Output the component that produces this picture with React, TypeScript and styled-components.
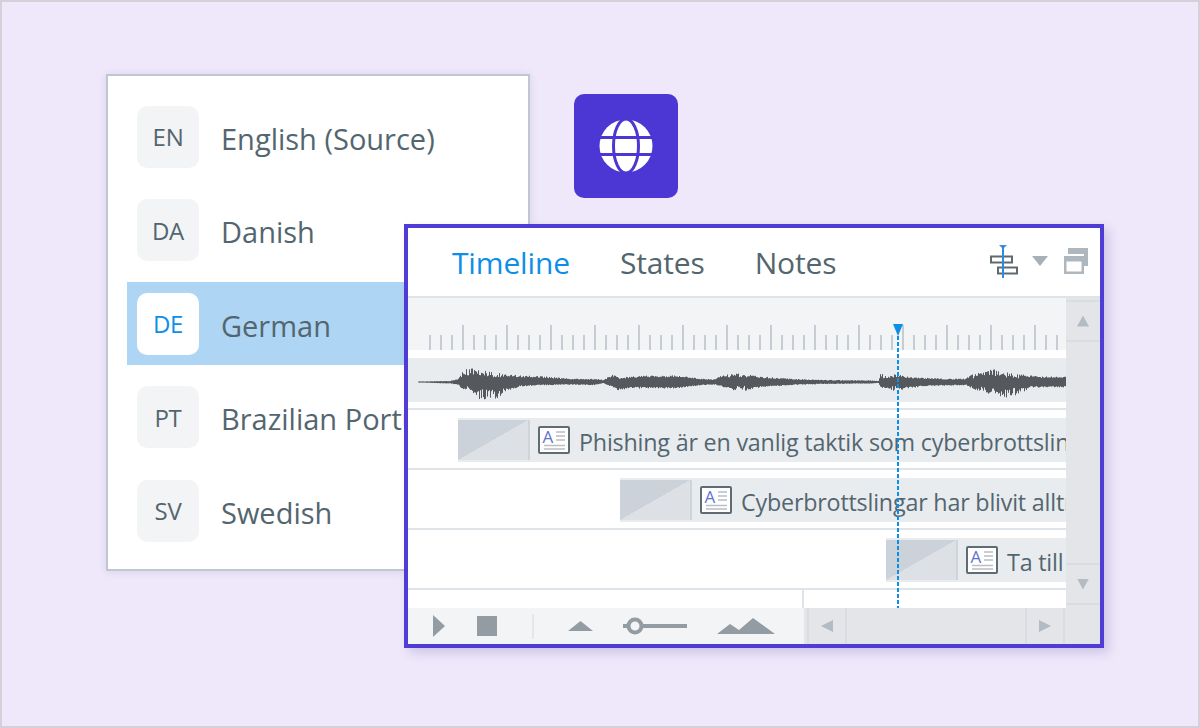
import React from 'react';
import styled, { createGlobalStyle } from 'styled-components';

const GlobalStyle = createGlobalStyle`
    html, body {
        margin: 0;
        padding: 0;
        background: #efe8fa;
        font-family: 'Open Sans', 'Noto Sans', sans-serif;
    }
`;

const Stage = styled.div`
    position: relative;
    box-sizing: border-box;
    width: 1200px;
    height: 728px;
    padding: 72px 0 0 104px;
    display: flex;
    align-items: flex-start;
    gap: 44px;
    background: #efe8fa;
    border: 2px solid #d4d1da;
    overflow: hidden;
`;

const LanguagePanel = styled.div`
    box-sizing: border-box;
    width: 424px;
    height: 497px;
    padding-top: 19px;
    display: flex;
    flex-direction: column;
    gap: 10.5px;
    background: #fff;
    border: 2px solid #bfc8d0;
    box-shadow: 0 1px 8px rgba(90, 80, 150, 0.14);
`;

const LanguageRow = styled.div<{ $active?: boolean }>`
    height: 83px;
    margin-left: 19px;
    padding-left: 10px;
    display: flex;
    align-items: center;
    gap: 22px;
    flex: none;
    white-space: nowrap;
    overflow: hidden;
    background: ${p => (p.$active ? '#aed5f3' : 'transparent')};
`;

const LangChip = styled.div<{ $active?: boolean }>`
    box-sizing: border-box;
    width: 62px;
    height: 62px;
    flex: none;
    display: flex;
    align-items: center;
    justify-content: center;
    border-radius: 10px;
    font-size: 24px;
    letter-spacing: -0.3px;
    color: ${p => (p.$active ? '#0d8fe8' : '#53666f')};
    background: ${p => (p.$active ? '#fff' : '#f3f4f6')};
`;

const LangName = styled.span`
    margin-top: 3px;
    font-size: 29px;
    color: #53666f;
`;

const GlobeTile = styled.div`
    width: 104px;
    height: 104px;
    margin-top: 20px;
    display: flex;
    align-items: center;
    justify-content: center;
    border-radius: 10px;
    background: #4c37d4;
`;

const TimelineWindow = styled.div`
    position: absolute;
    left: 402px;
    top: 222px;
    box-sizing: border-box;
    width: 700px;
    height: 424px;
    display: flex;
    flex-direction: column;
    background: #fff;
    border: 4px solid #4f3bd6;
    box-shadow: 5px 5px 10px rgba(80, 60, 160, 0.2);
`;

const TabBar = styled.div`
    box-sizing: border-box;
    height: 70px;
    flex: none;
    padding: 0 12px 2px 44px;
    display: flex;
    align-items: center;
    gap: 50px;
    border-bottom: 2px solid #dfe4e8;
`;

const Tab = styled.div<{ $active?: boolean }>`
    padding-top: 2px;
    font-size: 30px;
    letter-spacing: -0.15px;
    color: ${p => (p.$active ? '#0d8fe8' : '#53666f')};
`;

const TabTools = styled.div`
    margin-left: auto;
    display: flex;
    align-items: center;
    gap: 14px;
`;

const Body = styled.div`
    flex: 1;
    min-height: 0;
    display: flex;
`;

const TrackArea = styled.div`
    flex: 1;
    min-width: 0;
    display: flex;
    flex-direction: column;
`;

const Ruler = styled.div`
    box-sizing: border-box;
    height: 52px;
    flex: none;
    padding-left: 21px;
    display: flex;
    align-items: flex-end;
    gap: 9px;
    overflow: hidden;
    background: #f2f4f6;
`;

const Tick = styled.span<{ $major: boolean }>`
    width: 2px;
    flex: none;
    height: ${p => (p.$major ? 25 : 15)}px;
    background: #c5ccd3;
`;

const WaveRow = styled.div`
    height: 44px;
    flex: none;
    margin: 8px 0 6px;
    background: #e9ecef;
`;

const Track = styled.div<{ $start: number }>`
    box-sizing: border-box;
    height: 60px;
    flex: none;
    padding: 8px 0 6px ${p => p.$start}px;
    border-top: 2px solid #dfe4e8;
`;

const Clip = styled.div`
    height: 44px;
    display: flex;
    align-items: center;
    white-space: nowrap;
    overflow: hidden;
    background: #e9ecef;
`;

const ClipThumb = styled.div`
    box-sizing: border-box;
    width: 72px;
    height: 40px;
    flex: none;
    margin-right: 8px;
    background: linear-gradient(to bottom right, #ccd2d9 50%, #dde1e5 50%);
    border-right: 2px solid #cfd4d9;
`;

const ClipLabel = styled.span`
    padding-top: 3px;
    font-size: 23.3px;
    letter-spacing: -0.2px;
    color: #53666f;
`;

const TrackTail = styled.div`
    flex: 1;
    border-top: 2px solid #dfe4e8;
    display: flex;
    padding-left: 394px;
`;

const TailDivider = styled.span`
    width: 2px;
    background: #dfe4e8;
`;

const VScroll = styled.div`
    width: 34px;
    flex: none;
    padding: 2px 0 3px;
    box-sizing: border-box;
    display: flex;
    flex-direction: column;
    justify-content: space-between;
    background: #e3e5e8;
`;

const VButton = styled.div`
    box-sizing: border-box;
    height: 42px;
    display: flex;
    align-items: center;
    justify-content: center;
    border-top: 2px solid #d9dce0;
    border-bottom: 2px solid #d9dce0;
`;

const Arrow = styled.span<{ $dir: 'up' | 'down' | 'left' | 'right' }>`
    width: 12px;
    height: ${p => (p.$dir === 'up' || p.$dir === 'down' ? 11 : 12)}px;
    background: #b3bcc3;
    clip-path: ${p =>
        ({
            up: 'polygon(50% 0, 100% 100%, 0 100%)',
            down: 'polygon(0 0, 100% 0, 50% 100%)',
            left: 'polygon(100% 0, 100% 100%, 0 50%)',
            right: 'polygon(0 0, 100% 50%, 0 100%)',
        })[p.$dir]};
`;

const Footer = styled.div`
    height: 36px;
    flex: none;
    display: flex;
    background: #e3e5e8;
`;

const Toolbar = styled.div`
    box-sizing: border-box;
    width: 396px;
    flex: none;
    padding-left: 25px;
    display: flex;
    align-items: center;
    background: #f2f4f6;
`;

const ToolSlot = styled.span<{ $gap?: number }>`
    display: flex;
    margin-left: ${p => p.$gap ?? 0}px;
`;

const ToolSeparator = styled.span`
    width: 2px;
    height: 25px;
    margin-left: 35px;
    background: #e3e6ea;
`;

const HScroll = styled.div`
    width: 258px;
    flex: none;
    margin-left: 3px;
    display: flex;
    justify-content: space-between;
`;

const HButton = styled.div`
    box-sizing: border-box;
    width: 40px;
    display: flex;
    align-items: center;
    justify-content: center;
    border-left: 2px solid #d9dce0;
    border-right: 2px solid #d9dce0;
`;

const Playhead = styled.div`
    position: absolute;
    left: 489px;
    top: 96px;
    width: 2px;
    height: 284px;
    background: repeating-linear-gradient(to bottom, #0d8fe8 0 4px, transparent 4px 6px);
`;

const PlayheadCap = styled.span`
    position: absolute;
    left: -4px;
    top: 0;
    width: 10px;
    height: 12px;
    background: #0d8fe8;
    clip-path: polygon(0 0, 100% 0, 50% 100%);
`;

const GlobeIcon: React.FC = () => (
    <svg width="56" height="56" viewBox="0 0 56 56">
        <circle cx="28" cy="28" r="26.5" fill="#fff" />
        <ellipse cx="28" cy="28" rx="12.5" ry="27" fill="none" stroke="#4c37d4" strokeWidth="3" />
        <path d="M0 19.5H56M0 36.5H56" stroke="#4c37d4" strokeWidth="3" />
    </svg>
);

const ClusterIcon: React.FC = () => (
    <svg width="28" height="33" viewBox="0 0 28 33">
        <rect x="1" y="11.5" width="21" height="6" fill="none" stroke="#5f6a70" strokeWidth="2" />
        <rect x="8" y="22.5" width="19" height="6" fill="none" stroke="#5f6a70" strokeWidth="2" />
        <path d="M9 0h8l-4 4z" fill="#3f8fd8" />
        <path d="M13 1V33" stroke="#2b8be0" strokeWidth="2" />
    </svg>
);

const MenuCaret: React.FC = () => (
    <svg width="16" height="10" viewBox="0 0 16 10">
        <path d="M0 0H16L8 10Z" fill="#a8b1b7" />
    </svg>
);

const WindowsIcon: React.FC = () => (
    <svg width="24" height="26" viewBox="0 0 24 26" style={{ marginLeft: 2 }}>
        <path d="M4 0H24V18H20V6H4Z" fill="#aeb7bd" />
        <rect x="1.250" y="9.250" width="17.500" height="15.500" fill="#fff" stroke="#aeb7bd" strokeWidth="2.500" />
        <rect x="1" y="9" width="18" height="4.500" fill="#aeb7bd" />
    </svg>
);

const CaptionIcon: React.FC = () => (
    <svg width="32" height="28" viewBox="0 0 32 28" style={{ flex: 'none', marginRight: 9 }}>
        <rect x="1" y="1" width="30" height="26" rx="1" fill="#fff" stroke="#5f6c74" strokeWidth="2" />
        <text x="4.500" y="16.500" fontSize="17" fontFamily="'Open Sans', sans-serif" fill="#5f74cc">
            A
        </text>
        <path d="M18 6H27M18 10H27M18 14H27M6 19.500H27M6 23H27" stroke="#b9bfc4" strokeWidth="1.500" />
    </svg>
);

const ToolIcon: React.FC<{ w: number; h: number; d: string }> = ({ w, h, d }) => (
    <svg width={w} height={h} viewBox={`0 0 ${w} ${h}`}>
        <path d={d} fill="#939ca3" />
    </svg>
);

const SliderIcon: React.FC = () => (
    <svg width="64" height="18" viewBox="0 0 64 18">
        <path d="M0 9H64" stroke="#939ca3" strokeWidth="4" />
        <circle cx="12" cy="9" r="6.500" fill="#f2f4f6" stroke="#939ca3" strokeWidth="4" />
    </svg>
);

// x, amplitude above the centre, amplitude below it
const ENVELOPE: [number, number, number][] = [
    [0, 0.5, 0.5], [32, 1, 1.5], [40, 3, 3], [43, 8, 6], [49, 13, 10], [62, 12, 17], [77, 9, 18],
    [87, 7, 9], [102, 6, 4], [127, 5, 3], [152, 3, 2.5], [177, 3, 3], [185, 2, 1], [194, 7, 5],
    [200, 4, 8], [212, 5, 6], [232, 6, 6], [262, 6, 6], [282, 3, 3], [297, 2.5, 2.5], [302, 6, 4],
    [317, 8, 8], [322, 8, 9], [342, 5, 5], [372, 3, 3], [402, 2, 2], [452, 1.5, 1.5], [460, 1, 1],
    [462, 7, 5], [477, 8, 9], [487, 5, 6], [507, 4, 4], [527, 3, 3.5], [547, 3, 3], [552, 6, 5],
    [562, 10, 10], [572, 12, 13], [587, 9, 16], [602, 7, 12], [612, 6, 5], [627, 5, 5], [648, 5, 5],
];

const sampleEnvelope = (x: number): [number, number] => {
    const next = ENVELOPE.findIndex(point => point[0] >= x);
    if (next <= 0) return [ENVELOPE[0][1], ENVELOPE[0][2]];
    const [x0, top0, bottom0] = ENVELOPE[next - 1];
    const [x1, top1, bottom1] = ENVELOPE[next];
    const t = (x - x0) / (x1 - x0);
    return [top0 + (top1 - top0) * t, bottom0 + (bottom1 - bottom0) * t];
};

const buildWavePath = (): string => {
    let seed = 41;
    const random = () => {
        seed = (seed * 16807) % 2147483647;
        return seed / 2147483647;
    };
    let d = '';
    for (let x = 10; x < 658; x += 1) {
        const [top, bottom] = sampleEnvelope(x - 10);
        // loud passages are combed, quiet ones stay close to the envelope
        const spikeTop = top * (top > 7 ? 0.5 + random() * 0.62 : 0.78 + random() * 0.34);
        const spikeBottom = bottom * (bottom > 8 ? 0.42 + random() * 0.62 : 0.8 + random() * 0.3);
        d += `M${x + 0.5} ${(24 - spikeTop).toFixed(1)}V${(24 + spikeBottom).toFixed(1)}`;
    }
    return d;
};

const WAVE_PATH = buildWavePath();

const LANGUAGES = [
    { code: 'EN', name: 'English (Source)' },
    { code: 'DA', name: 'Danish' },
    { code: 'DE', name: 'German', active: true },
    { code: 'PT', name: 'Brazilian Portuguese' },
    { code: 'SV', name: 'Swedish' },
];

const TRACKS = [
    { start: 50, text: 'Phishing är en vanlig taktik som cyberbrottslingar' },
    { start: 212, text: 'Cyberbrottslingar har blivit alltmer' },
    { start: 478, text: 'Ta till' },
];

const TICKS = Array.from({ length: 58 }, (_, i) => i);

const App: React.FC = () => (
    <Stage>
        <GlobalStyle />
        <LanguagePanel>
            {LANGUAGES.map(lang => (
                <LanguageRow key={lang.code} $active={lang.active}>
                    <LangChip $active={lang.active}>{lang.code}</LangChip>
                    <LangName>{lang.name}</LangName>
                </LanguageRow>
            ))}
        </LanguagePanel>
        <GlobeTile>
            <GlobeIcon />
        </GlobeTile>
        <TimelineWindow>
            <TabBar>
                <Tab $active>Timeline</Tab>
                <Tab>States</Tab>
                <Tab>Notes</Tab>
                <TabTools>
                    <ClusterIcon />
                    <MenuCaret />
                    <WindowsIcon />
                </TabTools>
            </TabBar>
            <Body>
                <TrackArea>
                    <Ruler>
                        {TICKS.map(i => (
                            <Tick key={i} $major={i % 4 === 3} />
                        ))}
                    </Ruler>
                    <WaveRow>
                        <svg width="658" height="44" viewBox="0 0 658 44">
                            <path d={WAVE_PATH} stroke="#55595d" strokeWidth="1" fill="none" />
                        </svg>
                    </WaveRow>
                    {TRACKS.map(track => (
                        <Track key={track.start} $start={track.start}>
                            <Clip>
                                <ClipThumb />
                                <CaptionIcon />
                                <ClipLabel>{track.text}</ClipLabel>
                            </Clip>
                        </Track>
                    ))}
                    <TrackTail>
                        <TailDivider />
                    </TrackTail>
                </TrackArea>
                <VScroll>
                    <VButton>
                        <Arrow $dir="up" />
                    </VButton>
                    <VButton>
                        <Arrow $dir="down" />
                    </VButton>
                </VScroll>
            </Body>
            <Footer>
                <Toolbar>
                    <ToolIcon w={12} h={22} d="M0 0L12 11L0 22Z" />
                    <ToolSlot $gap={32}>
                        <ToolIcon w={20} h={20} d="M0 0H20V20H0Z" />
                    </ToolSlot>
                    <ToolSeparator />
                    <ToolSlot $gap={34}>
                        <ToolIcon w={25} h={10} d="M12.500 0L25 10H0Z" />
                    </ToolSlot>
                    <ToolSlot $gap={30}>
                        <SliderIcon />
                    </ToolSlot>
                    <ToolSlot $gap={30}>
                        <ToolIcon w={58} h={16} d="M0 16L13 6L22 12L36 0L58 16Z" />
                    </ToolSlot>
                </Toolbar>
                <HScroll>
                    <HButton>
                        <Arrow $dir="left" />
                    </HButton>
                    <HButton>
                        <Arrow $dir="right" />
                    </HButton>
                </HScroll>
            </Footer>
            <Playhead>
                <PlayheadCap />
            </Playhead>
        </TimelineWindow>
    </Stage>
);

export default App;
